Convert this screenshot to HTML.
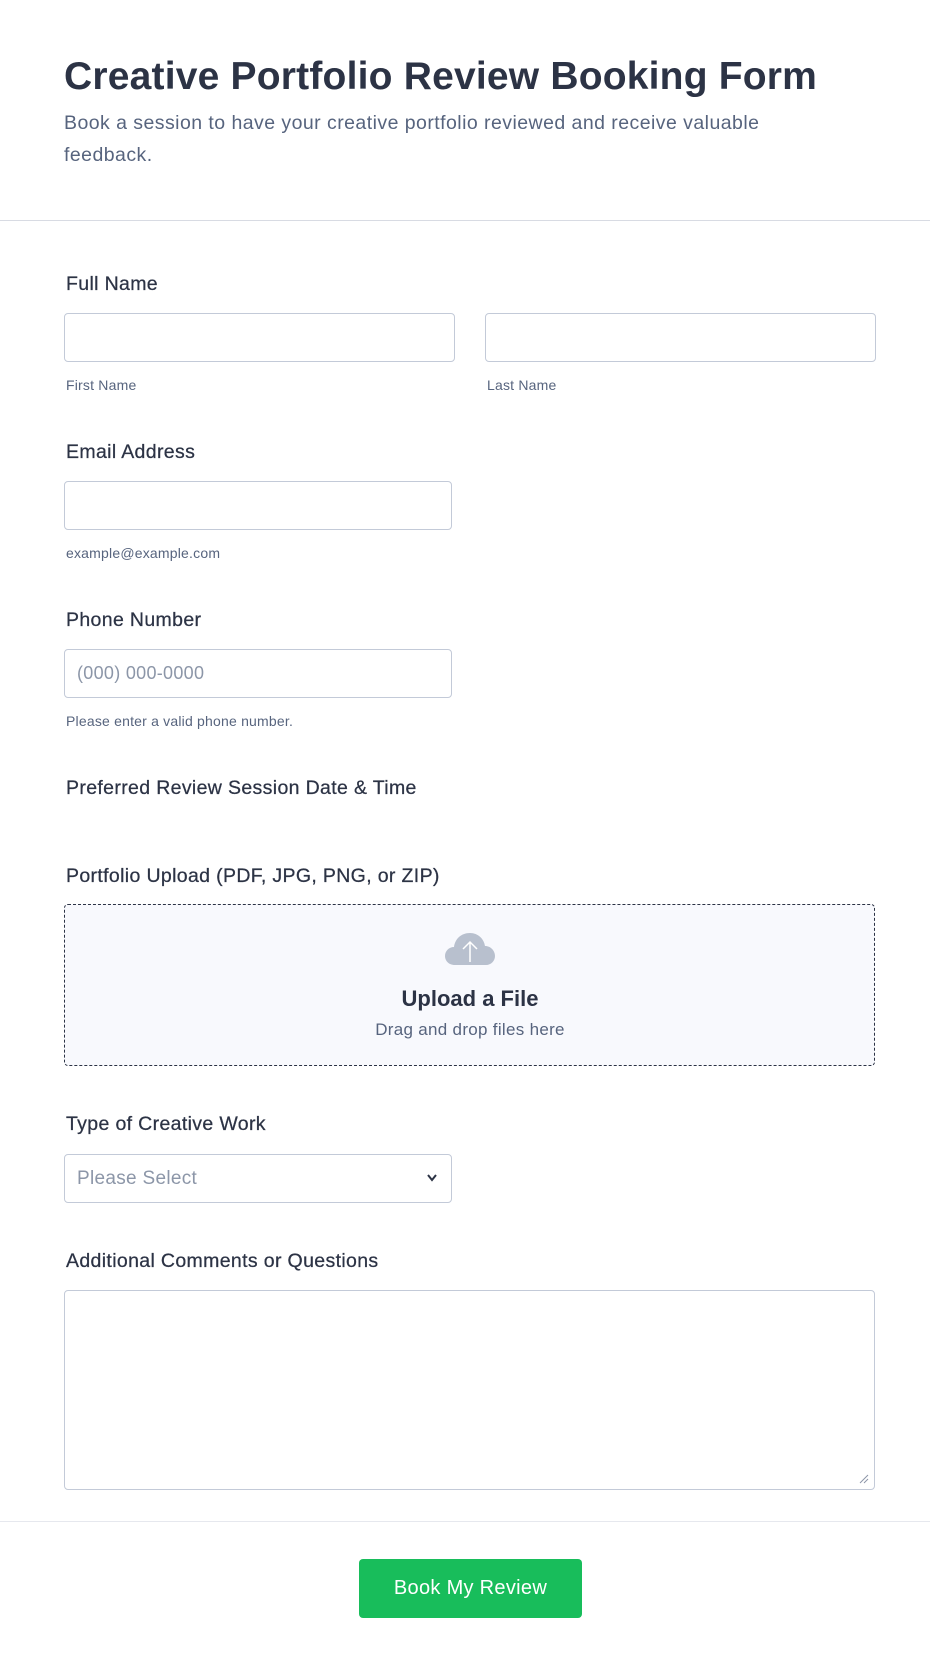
<!DOCTYPE html>
<html><head><meta charset="utf-8"><style>
*{box-sizing:border-box;margin:0;padding:0}
body{width:930px;height:1668px;background:#fff;font-family:"Liberation Sans",sans-serif;color:#2c3345;position:relative;overflow:hidden}
.a{position:absolute;white-space:nowrap}
.lbl{font-size:19.5px;color:#2c3345;left:66px;letter-spacing:0.35px;-webkit-text-stroke:0.25px #2c3345}
.sub{font-size:14px;color:#57647e;letter-spacing:0.2px}
.inp{position:absolute;border:1px solid #c3cad8;border-radius:4px;background:#fff;height:49px}
</style></head><body>
<div class="a" style="left:64px;top:55px;font-size:39px;font-weight:bold;letter-spacing:0.2px">Creative Portfolio Review Booking Form</div>
<div class="a" style="left:64px;top:107px;font-size:19.5px;line-height:32px;color:#57647e;white-space:normal;width:860px;letter-spacing:0.45px">Book a session to have your creative portfolio reviewed and receive valuable<br>feedback.</div>
<div style="position:absolute;left:0;top:220px;width:930px;height:1px;background:#d8dbe3"></div>

<div class="a lbl" style="top:273px">Full Name</div>
<div class="inp" style="left:64px;top:313px;width:391px"></div>
<div class="inp" style="left:485px;top:313px;width:391px"></div>
<div class="a sub" style="left:66px;top:377px">First Name</div>
<div class="a sub" style="left:487px;top:377px">Last Name</div>

<div class="a lbl" style="top:441px">Email Address</div>
<div class="inp" style="left:64px;top:481px;width:388px"></div>
<div class="a sub" style="left:66px;top:545px">example@example.com</div>

<div class="a lbl" style="top:609px">Phone Number</div>
<div class="inp" style="left:64px;top:649px;width:388px"></div>
<div class="a" style="left:77px;top:663px;font-size:18px;color:#8c96a8;letter-spacing:0.3px">(000) 000-0000</div>
<div class="a sub" style="left:66px;top:713px">Please enter a valid phone number.</div>

<div class="a lbl" style="top:777px">Preferred Review Session Date &amp; Time</div>

<div class="a lbl" style="top:865px">Portfolio Upload (PDF, JPG, PNG, or ZIP)</div>
<div style="position:absolute;left:64px;top:904px;width:811px;height:162px;border:1px dashed #2c3345;border-radius:4px;background:#f8f9fd"></div>
<svg class="a" style="left:445px;top:932px" width="50" height="34" viewBox="0 0 50 34">
<path d="M10 33 C3 33 0 28 0 24 C0 19 4 15 9 15 C10 7 16 1 25 1 C33 1 39 7 40 14 C46 14 50 19 50 24 C50 29 46 33 41 33 Z" fill="#b8c0ce"/>
<path d="M25 30 V10 M18 17 L25 10 L32 17" stroke="#fff" stroke-width="1.5" fill="none"/>
</svg>
<div class="a" style="left:0;width:940px;text-align:center;top:986px;font-size:22px;font-weight:bold">Upload a File</div>
<div class="a" style="left:0;width:940px;text-align:center;top:1020px;font-size:17px;color:#57647e;letter-spacing:0.3px">Drag and drop files here</div>

<div class="a lbl" style="top:1113px">Type of Creative Work</div>
<div class="inp" style="left:64px;top:1154px;width:388px"></div>
<div class="a" style="left:77px;top:1168px;font-size:19px;color:#8c96a8;letter-spacing:0.3px">Please Select</div>
<svg class="a" style="left:426px;top:1173px" width="12" height="10" viewBox="0 0 12 10"><path d="M2 2 L6 7 L10 2" stroke="#2c3345" stroke-width="2" fill="none"/></svg>

<div class="a lbl" style="top:1250px">Additional Comments or Questions</div>
<div class="inp" style="left:64px;top:1290px;width:811px;height:200px"></div>
<svg class="a" style="left:859px;top:1474px" width="10" height="10"><path d="M1 9 L9 1 M5 9 L9 5" stroke="#8c96a8" stroke-width="1"/></svg>

<div style="position:absolute;left:0;top:1521px;width:930px;height:1px;background:#e6e8ee"></div>
<div style="position:absolute;left:359px;top:1559px;width:223px;height:59px;background:#18bd5b;border-radius:4px;color:#fff;font-size:20px;text-align:center;line-height:59px;letter-spacing:0.3px">Book My Review</div>
</body></html>
